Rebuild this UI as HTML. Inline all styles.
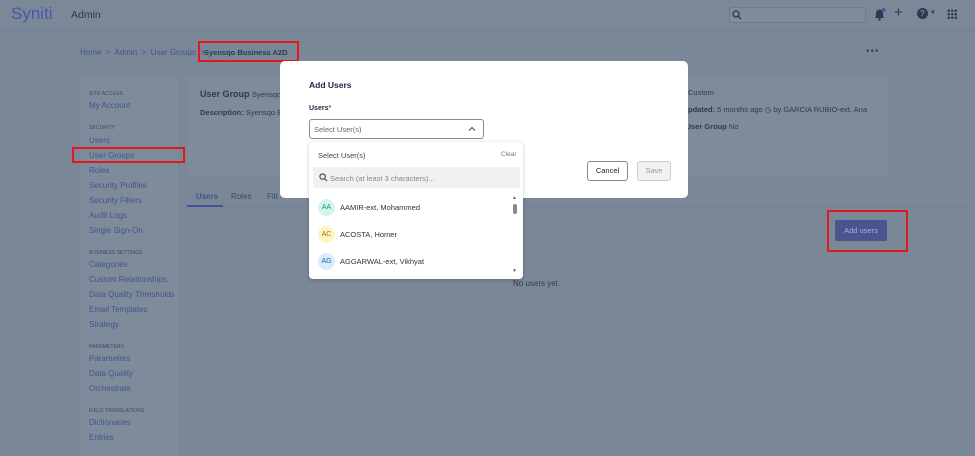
<!DOCTYPE html>
<html><head><style>
*{box-sizing:border-box;margin:0;padding:0}
body{width:975px;height:456px;overflow:hidden;background:#7a8797;font-family:"Liberation Sans",sans-serif;position:relative;color:#2f3a5e}
.a{position:absolute}
.top{left:0;top:0;width:975px;height:31px;border-bottom:1px solid #717e8e;background:#7b8898}
.lnk{color:#46528f;font-size:8px}
.sec{font-size:5px;color:#3d4766;letter-spacing:.1px}
.red{border:2px solid #e5161c}
.panel{background:#7e8b9b}
.modal{left:280px;top:61px;width:408px;height:137px;background:#fff;border-radius:5px}
.dd{left:309px;top:142px;width:214px;height:137px;background:#fff;border-radius:4px;box-shadow:0 1px 4px rgba(0,0,0,.2)}
.av{width:17px;height:17px;border-radius:50%;font-size:7px;text-align:center;line-height:17px}
.nm{font-size:7.5px;color:#333}
</style></head><body>
<div class="a top"></div>
<div class="a" style="left:11px;top:4px;font-size:17px;color:#4a55b0">Syniti</div>
<div class="a" style="left:71px;top:9px;font-size:10.5px;color:#2e3a52">Admin</div>
<div class="a" style="left:729px;top:7px;width:137px;height:16px;border:1px solid #6d7a8a;border-radius:3px;background:#808c9c"></div>
<svg class="a" style="left:732px;top:10px" width="10" height="10" viewBox="0 0 10 10"><circle cx="4" cy="4" r="3" fill="none" stroke="#2e3a52" stroke-width="1.3"/><path d="M6.2 6.2L9 9" stroke="#2e3a52" stroke-width="1.3"/></svg>
<svg class="a" style="left:873px;top:7px" width="14" height="14" viewBox="0 0 14 14"><path d="M2 11h9l-1-2V6a3.5 3.5 0 0 0-7 0v3z" fill="#2e3a52"/><circle cx="6.5" cy="12.3" r="1.3" fill="#2e3a52"/><circle cx="10.5" cy="3" r="2" fill="#4a55b0"/></svg>
<div class="a" style="left:894px;top:4px;font-size:15px;color:#2e3a52">+</div>
<div class="a" style="left:917px;top:8px;width:11px;height:11px;border-radius:50%;background:#2e3a52;color:#7a8797;font-size:8px;text-align:center;line-height:11px;font-weight:bold">?</div>
<div class="a" style="left:930px;top:10px;font-size:6px;color:#2e3a52">&#9660;</div>
<div class="a" style="left:947px;top:9px;width:10px;height:10px;background:radial-gradient(circle,#2e3a52 1.2px,transparent 1.4px) 0 0/3.5px 3.5px"></div>

<div class="a lnk" style="left:80px;top:48px">Home &nbsp;&gt;&nbsp; Admin &nbsp;&gt;&nbsp; User Groups &nbsp;&gt;</div>
<div class="a red" style="left:198px;top:41px;width:101px;height:21px"></div>
<div class="a" style="left:204px;top:48px;font-size:7.5px;font-weight:bold;color:#2e3a52">Syensqo Business A2D</div>
<div class="a" style="left:866px;top:46px;font-size:10px;color:#3d4766;letter-spacing:1px">•••</div>

<div class="a panel" style="left:80px;top:76px;width:98px;height:380px"></div>
<div class="a sec" style="left:89px;top:91px">SITE ACCESS</div>
<div class="a lnk" style="left:89px;top:101px">My Account</div>
<div class="a sec" style="left:89px;top:125px">SECURITY</div>
<div class="a lnk" style="left:89px;top:136px">Users</div>
<div class="a lnk" style="left:89px;top:151px">User Groups</div>
<div class="a red" style="left:72px;top:147px;width:113px;height:16px"></div>
<div class="a lnk" style="left:89px;top:166px">Roles</div>
<div class="a lnk" style="left:89px;top:181px">Security Profiles</div>
<div class="a lnk" style="left:89px;top:196px">Security Filters</div>
<div class="a lnk" style="left:89px;top:211px">Audit Logs</div>
<div class="a lnk" style="left:89px;top:226px">Single Sign-On</div>
<div class="a sec" style="left:89px;top:250px">BUSINESS SETTINGS</div>
<div class="a lnk" style="left:89px;top:260px">Categories</div>
<div class="a lnk" style="left:89px;top:275px">Custom Relationships</div>
<div class="a lnk" style="left:89px;top:290px">Data Quality Thresholds</div>
<div class="a lnk" style="left:89px;top:305px">Email Templates</div>
<div class="a lnk" style="left:89px;top:320px">Strategy</div>
<div class="a sec" style="left:89px;top:344px">PARAMETERS</div>
<div class="a lnk" style="left:89px;top:354px">Parameters</div>
<div class="a lnk" style="left:89px;top:369px">Data Quality</div>
<div class="a lnk" style="left:89px;top:384px">Orchestrate</div>
<div class="a sec" style="left:89px;top:408px">FIELD TRANSLATIONS</div>
<div class="a lnk" style="left:89px;top:418px">Dictionaries</div>
<div class="a lnk" style="left:89px;top:433px">Entries</div>

<div class="a panel" style="left:187px;top:77px;width:700px;height:99px"></div>
<div class="a" style="left:200px;top:89px;font-size:9px;font-weight:bold;color:#2e3a52">User Group <span style="font-weight:normal;font-size:7.5px">Syensqo</span></div>
<div class="a" style="left:200px;top:108px;font-size:7.5px;color:#2e3a52"><b>Description:</b> Syensqo B</div>
<div class="a" style="left:688px;top:88px;font-size:7.5px;color:#2e3a52">Custom</div>
<div class="a" style="left:688px;top:105px;font-size:7.5px;color:#2e3a52"><b>pdated:</b> 5 months ago &#9719; by GARCIA RUBIO-ext, Ana</div>
<div class="a" style="left:681px;top:122px;font-size:7.5px;color:#2e3a52"><b>t User Group</b> No</div>
<div class="a" style="left:187px;top:206px;width:780px;height:1px;background:#727f8f"></div>
<div class="a" style="left:187px;top:205px;width:36px;height:2px;background:#45509a"></div>
<div class="a lnk" style="left:196px;top:192px;font-weight:bold">Users</div>
<div class="a" style="left:231px;top:192px;font-size:8px;color:#3d4766">Roles</div>
<div class="a" style="left:267px;top:192px;font-size:8px;color:#3d4766">Filt</div>
<div class="a" style="left:513px;top:279px;font-size:8px;color:#2e3a52">No users yet.</div>
<div class="a" style="left:835px;top:220px;width:52px;height:21px;background:#4a5590;border-radius:2px;color:#aab0d0;font-size:7.5px;text-align:center;line-height:21px">Add users</div>
<div class="a red" style="left:827px;top:210px;width:81px;height:42px"></div>

<div class="a modal"></div>
<div class="a" style="left:309px;top:80px;font-size:8.5px;font-weight:bold;color:#1f2548">Add Users</div>
<div class="a" style="left:309px;top:105px;font-size:7px;font-weight:bold;color:#1f2548">Users<span style="color:#e0303a">*</span></div>
<div class="a" style="left:309px;top:119px;width:175px;height:20px;border:1px solid #8a8a8a;border-radius:3px"></div>
<div class="a" style="left:314px;top:125px;font-size:7.5px;color:#666">Select User(s)</div>
<svg class="a" style="left:468px;top:126px" width="8" height="6" viewBox="0 0 8 6"><path d="M1 4.5L4 1.5L7 4.5" fill="none" stroke="#444" stroke-width="1"/></svg>
<div class="a" style="left:587px;top:161px;width:41px;height:20px;border:1px solid #888;border-radius:3px;font-size:7.5px;text-align:center;line-height:18px;color:#222">Cancel</div>
<div class="a" style="left:637px;top:161px;width:34px;height:20px;border:1px solid #ccc;border-radius:3px;background:#f2f2f2;font-size:7.5px;text-align:center;line-height:18px;color:#999">Save</div>

<div class="a dd"></div>
<div class="a" style="left:318px;top:151px;font-size:7.5px;color:#444">Select User(s)</div>
<div class="a" style="left:501px;top:151px;font-size:6.5px;color:#777">Clear</div>
<div class="a" style="left:313px;top:167px;width:207px;height:21px;background:#f1f1f1"></div>
<svg class="a" style="left:319px;top:173px" width="9" height="9" viewBox="0 0 10 10"><circle cx="4" cy="4" r="3" fill="none" stroke="#444" stroke-width="1.2"/><path d="M6.2 6.2L9 9" stroke="#444" stroke-width="1.2"/></svg>
<div class="a" style="left:330px;top:174px;font-size:7.5px;color:#888">Search (at least 3 characters)...</div>
<div class="a av" style="left:318px;top:199px;background:#d4f4ee;color:#2b8a79">AA</div>
<div class="a nm" style="left:340px;top:203px">AAMIR-ext, Mohammed</div>
<div class="a av" style="left:318px;top:226px;background:#fdf4c3;color:#9a7a10">AC</div>
<div class="a nm" style="left:340px;top:230px">ACOSTA, Homer</div>
<div class="a av" style="left:318px;top:253px;background:#d9ecfb;color:#2b6a9a">AG</div>
<div class="a nm" style="left:340px;top:257px">AGGARWAL-ext, Vikhyat</div>
<div class="a" style="left:512px;top:195px;font-size:5px;color:#666">&#9650;</div>
<div class="a" style="left:513px;top:204px;width:4px;height:10px;background:#888;border-radius:2px"></div>
<div class="a" style="left:512px;top:268px;font-size:5px;color:#666">&#9660;</div>
</body></html>
